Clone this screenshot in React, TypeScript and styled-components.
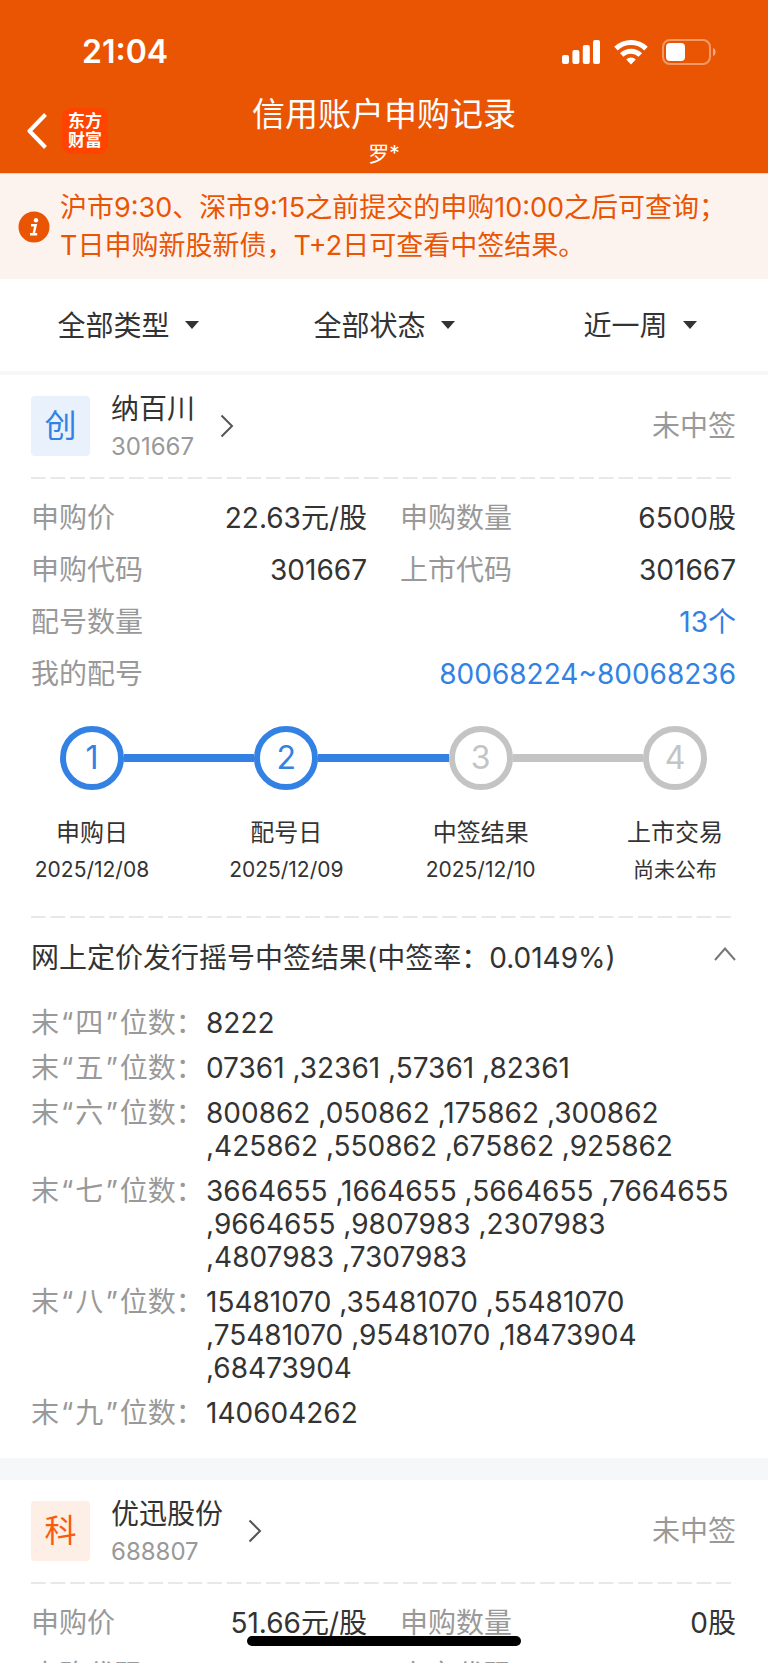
import React from 'react';
import styled, { createGlobalStyle } from 'styled-components';

const colors = {
  brand: '#ea5504',
  notice: '#fdf3ee',
  text: '#333333',
  muted: '#999999',
  blue: '#3381e3',
  idle: '#c4c4c4',
  band: '#f6f7f9',
};

const GlobalStyle = createGlobalStyle`
  * { box-sizing: border-box; }
  html, body { margin: 0; padding: 0; }
  body {
    background: #ffffff;
    color: ${colors.text};
    font-family: Inter, "Noto Sans CJK SC", sans-serif;
    font-size: 28px;
    font-weight: 400;
  }
  button, select { font: inherit; color: inherit; background: none; border: 0; padding: 0; margin: 0; }
  h1, h2, p, ol, dl, dd { margin: 0; padding: 0; font-weight: inherit; }
`;

const Screen = styled.div`
  display: flex;
  flex-direction: column;
  height: 100vh;
  overflow: hidden;
`;

const Header = styled.header`
  flex: none;
  background: ${colors.brand};
  color: #ffffff;
`;

const StatusBar = styled.div`
  display: flex;
  align-items: center;
  justify-content: space-between;
  height: 94px;
  padding: 9px 52px 0 82px;
`;

const Clock = styled.time`
  font-size: 32px;
  line-height: 40px;
  font-weight: 600;
`;

const StatusIcons = styled.div`
  display: flex;
  align-items: center;
  gap: 14px;
  svg { display: block; }
`;

const NavBar = styled.nav`
  display: grid;
  grid-template-columns: 1fr auto 1fr;
  align-items: center;
  padding: 0 27px 5px;
`;

const NavLeft = styled.div`
  display: flex;
  align-items: center;
  gap: 15px;
`;

const IconButton = styled.button`
  display: flex;
  align-items: center;
  cursor: pointer;
`;

const BrandLogo = styled.a`
  display: flex;
  flex-direction: column;
  align-items: center;
  justify-content: center;
  width: 46px;
  height: 46px;
  border-radius: 9px;
  background: #ff4400;
  color: #ffffff;
  font-size: 17px;
  line-height: 19px;
  font-weight: 700;
  text-decoration: none;
`;

const NavTitle = styled.div`
  display: flex;
  flex-direction: column;
  align-items: center;
  gap: 6px;
`;

const Title = styled.h1`
  font-size: 33px;
  line-height: 40px;
`;

const Account = styled.p`
  font-size: 21px;
  line-height: 28px;
`;

const Notice = styled.div`
  flex: none;
  display: flex;
  align-items: center;
  gap: 10px;
  padding: 15px 18px 14px;
  border-top: 1px solid #f9cdb3;
  background: ${colors.notice};
  color: ${colors.brand};
  font-size: 27px;
  line-height: 38px;
  svg { flex: none; }
`;

const Filters = styled.div`
  flex: none;
  display: grid;
  grid-template-columns: repeat(3, 1fr);
  height: 96px;
  border-bottom: 4px solid ${colors.band};
`;

const Filter = styled.label`
  display: flex;
  align-items: center;
  justify-content: center;
  gap: 15px;
`;

const FilterSelect = styled.select`
  appearance: none;
  field-sizing: content;
  padding-top: 2px;
  line-height: 40px;
  cursor: pointer;
`;

const List = styled.main`
  flex: 1;
  min-height: 0;
  overflow-y: auto;
  scrollbar-width: none;
`;

const Card = styled.article`
  padding: 21px 32px 28px 31px;
  & + & { border-top: 22px solid ${colors.band}; }
`;

const CardHead = styled.header`
  display: flex;
  align-items: center;
  height: 60px;
  margin-bottom: 21px;
`;

const Badge = styled.span<{ $tone: 'blue' | 'orange' }>`
  display: flex;
  align-items: center;
  justify-content: center;
  width: 59px;
  height: 60px;
  margin-right: 21px;
  border-radius: 4px;
  font-size: 32px;
  line-height: 40px;
  color: ${p => (p.$tone === 'blue' ? colors.blue : '#fa5a0a')};
  background: ${p => (p.$tone === 'blue' ? '#e9f1fc' : '#fdeee6')};
`;

const StockLink = styled.a`
  display: flex;
  align-items: center;
  gap: 25px;
  color: ${colors.text};
  text-decoration: none;
`;

const StockText = styled.div`
  padding-top: 2px;
`;

const StockName = styled.h2`
  font-size: 28px;
  line-height: 40px;
`;

const StockCode = styled.p`
  font-size: 24px;
  line-height: 36px;
  color: ${colors.muted};
`;

const Status = styled.span`
  margin-left: auto;
  color: ${colors.muted};
  line-height: 40px;
`;

const Divider = styled.hr`
  height: 2px;
  margin: 0;
  border: 0;
  background: linear-gradient(90deg, #e8e8e8 77%, transparent 77%) 0 0 / calc(100% / 36) 2px repeat-x;
`;

const Facts = styled.dl`
  display: grid;
  grid-template-columns: 1fr 1fr;
  column-gap: 33px;
  row-gap: 12px;
  padding: 19px 0 0;
  line-height: 40px;
`;

const Fact = styled.div<{ $wide?: boolean }>`
  display: flex;
  justify-content: space-between;
  grid-column: ${p => (p.$wide ? '1 / -1' : 'auto')};
`;

const FactLabel = styled.dt`
  color: ${colors.muted};
`;

const FactValue = styled.dd<{ $link?: boolean }>`
  color: ${p => (p.$link ? colors.blue : colors.text)};
`;

const Track = styled.div`
  display: flex;
  align-items: center;
  padding: 0 29px;
  margin-top: 32px;
`;

const Dot = styled.span<{ $done: boolean }>`
  flex: none;
  display: flex;
  align-items: center;
  justify-content: center;
  width: 64px;
  height: 64px;
  border: 6px solid ${p => (p.$done ? colors.blue : colors.idle)};
  border-radius: 50%;
  color: ${p => (p.$done ? colors.blue : colors.idle)};
  font-size: 32px;
  line-height: 40px;
`;

const Line = styled.span<{ $done: boolean }>`
  flex: 1;
  height: 8px;
  background: ${p => (p.$done ? colors.blue : colors.idle)};
`;

const StepLabels = styled.ol`
  display: flex;
  justify-content: space-between;
  margin: 26px 0 30px;
  list-style: none;
`;

const StepLabel = styled.li`
  display: flex;
  flex-direction: column;
  align-items: center;
  gap: 4px;
  width: 122px;
  font-size: 24px;
  line-height: 34px;
  white-space: nowrap;
  small { font-size: 21px; line-height: 32px; }
`;

const ResultToggle = styled.button`
  display: flex;
  align-items: center;
  justify-content: space-between;
  width: 100%;
  padding: 20px 0;
  line-height: 40px;
  text-align: left;
  cursor: pointer;
`;

const Results = styled.dl`
  display: grid;
  grid-template-columns: 175px 1fr;
  row-gap: 12px;
  padding-top: 9px;
  line-height: 33px;
  white-space: nowrap;
`;

const ResultLabel = styled.dt`
  color: ${colors.muted};
`;

const Quote = styled.span`
  padding: 0 2px;
`;

const ResultLine = styled.span`
  display: block;
`;

const HomeIndicator = styled.div`
  position: fixed;
  left: 50%;
  bottom: 17px;
  width: 274px;
  height: 10px;
  margin-left: -137px;
  border-radius: 5px;
  background: #000000;
`;

const SignalIcon = () => (
  <svg width="38" height="26" viewBox="0 0 38 26" fill="#fff" aria-hidden="true">
    <rect x="0" y="16" width="7" height="9" rx="2" />
    <rect x="10.4" y="11" width="7" height="14" rx="2" />
    <rect x="20.8" y="6" width="7" height="19" rx="2" />
    <rect x="31" y="1" width="7" height="24" rx="2" />
  </svg>
);

const WifiIcon = () => (
  <svg width="34" height="26" viewBox="0 0 34 26" fill="none" stroke="#fff" strokeWidth="5" aria-hidden="true">
    <path d="M2 9.6a21.6 21.6 0 0 1 30 0" />
    <path d="M7.7 16a13.2 13.2 0 0 1 18.6 0" />
    <path d="M17 25.5l-4.8-5a6.8 6.8 0 0 1 9.6 0z" fill="#fff" stroke="none" />
  </svg>
);

const BatteryIcon = () => (
  <svg width="54" height="26" viewBox="0 0 54 26" fill="none" aria-hidden="true">
    <rect x="1" y="1" width="47" height="24" rx="7" stroke="#fff" strokeOpacity="0.4" strokeWidth="2" />
    <rect x="4" y="4" width="19" height="18" rx="4" fill="#fff" />
    <path d="M51 9c3.4 1 3.4 7 0 8z" fill="#fff" fillOpacity="0.5" />
  </svg>
);

const BackIcon = () => (
  <svg width="20" height="36" viewBox="0 0 20 36" fill="none" stroke="#fff" strokeWidth="4" strokeLinejoin="round" aria-hidden="true">
    <path d="M18.5 1.5L2.5 18l16 16.5" />
  </svg>
);

const InfoIcon = () => (
  <svg width="32" height="32" viewBox="0 0 32 32" aria-hidden="true">
    <circle cx="16" cy="16" r="15.5" fill={colors.brand} />
    <circle cx="18" cy="9.3" r="2.2" fill="#fff" />
    <path d="M13 14.2h4.6l-2 9M12 23.2h7.2" fill="none" stroke="#fff" strokeWidth="2.4" />
  </svg>
);

const CaretIcon = () => (
  <svg width="14" height="8" viewBox="0 0 14 8" fill={colors.text} aria-hidden="true">
    <path d="M0 0h14L7 8z" />
  </svg>
);

const ChevronRight = () => (
  <svg width="14" height="24" viewBox="0 0 14 24" fill="none" stroke="#555" strokeWidth="2" aria-hidden="true">
    <path d="M1.5 1.5L12 12 1.5 22.5" />
  </svg>
);

const ChevronUp = () => (
  <svg width="22" height="24" viewBox="0 0 22 24" fill="none" stroke="#777" strokeWidth="2" aria-hidden="true">
    <path d="M1 14L11 2.5 21 14" />
  </svg>
);

type FactItem = { label: string; value: string; wide?: boolean; link?: boolean };
type Step = { name: string; date: string; done: boolean };
type Result = { digit: string; lines: string[] };
type Subscription = {
  board: string;
  tone: 'blue' | 'orange';
  name: string;
  code: string;
  facts: FactItem[];
  steps?: Step[];
  rate?: string;
  results?: Result[];
};

const filters = [
  { name: '类型', options: ['全部类型', '新股', '新债'] },
  { name: '状态', options: ['全部状态', '已中签', '未中签'] },
  { name: '时间', options: ['近一周', '近一月', '近一年'] },
];

const subscriptions: Subscription[] = [
  {
    board: '创',
    tone: 'blue',
    name: '纳百川',
    code: '301667',
    facts: [
      { label: '申购价', value: '22.63元/股' },
      { label: '申购数量', value: '6500股' },
      { label: '申购代码', value: '301667' },
      { label: '上市代码', value: '301667' },
      { label: '配号数量', value: '13个', wide: true, link: true },
      { label: '我的配号', value: '80068224~80068236', wide: true, link: true },
    ],
    steps: [
      { name: '申购日', date: '2025/12/08', done: true },
      { name: '配号日', date: '2025/12/09', done: true },
      { name: '中签结果', date: '2025/12/10', done: false },
      { name: '上市交易', date: '尚未公布', done: false },
    ],
    rate: '0.0149%',
    results: [
      { digit: '四', lines: ['8222'] },
      { digit: '五', lines: ['07361 ,32361 ,57361 ,82361'] },
      { digit: '六', lines: ['800862 ,050862 ,175862 ,300862', ',425862 ,550862 ,675862 ,925862'] },
      {
        digit: '七',
        lines: ['3664655 ,1664655 ,5664655 ,7664655', ',9664655 ,9807983 ,2307983', ',4807983 ,7307983'],
      },
      {
        digit: '八',
        lines: ['15481070 ,35481070 ,55481070', ',75481070 ,95481070 ,18473904', ',68473904'],
      },
      { digit: '九', lines: ['140604262'] },
    ],
  },
  {
    board: '科',
    tone: 'orange',
    name: '优迅股份',
    code: '688807',
    facts: [
      { label: '申购价', value: '51.66元/股' },
      { label: '申购数量', value: '0股' },
      { label: '申购代码', value: '' },
      { label: '上市代码', value: '' },
    ],
  },
];

const Progress = ({ steps }: { steps: Step[] }) => (
  <>
    <Track>
      {steps.map((step, i) => (
        <React.Fragment key={step.name}>
          {i > 0 && <Line $done={steps[i - 1].done} />}
          <Dot $done={step.done}>{i + 1}</Dot>
        </React.Fragment>
      ))}
    </Track>
    <StepLabels>
      {steps.map(step => (
        <StepLabel key={step.name}>
          {step.name}
          <small>{step.date}</small>
        </StepLabel>
      ))}
    </StepLabels>
  </>
);

const SubscriptionCard = ({ item }: { item: Subscription }) => {
  const [open, setOpen] = React.useState(true);
  return (
    <Card>
      <CardHead>
        <Badge $tone={item.tone}>{item.board}</Badge>
        <StockLink href={`#${item.code}`}>
          <StockText>
            <StockName>{item.name}</StockName>
            <StockCode>{item.code}</StockCode>
          </StockText>
          <ChevronRight />
        </StockLink>
        <Status>未中签</Status>
      </CardHead>
      <Divider />
      <Facts>
        {item.facts.map(fact => (
          <Fact key={fact.label} $wide={fact.wide}>
            <FactLabel>{fact.label}</FactLabel>
            <FactValue $link={fact.link}>{fact.value}</FactValue>
          </Fact>
        ))}
      </Facts>
      {item.steps && <Progress steps={item.steps} />}
      {item.results && (
        <>
          <Divider />
          <ResultToggle type="button" aria-expanded={open} onClick={() => setOpen(!open)}>
            <span>网上定价发行摇号中签结果(中签率：{item.rate})</span>
            <ChevronUp />
          </ResultToggle>
          {open && (
            <Results>
              {item.results.map(result => (
                <React.Fragment key={result.digit}>
                  <ResultLabel>
                    末<Quote>“</Quote>
                    {result.digit}
                    <Quote>”</Quote>位数：
                  </ResultLabel>
                  <dd>
                    {result.lines.map(line => (
                      <ResultLine key={line}>{line}</ResultLine>
                    ))}
                  </dd>
                </React.Fragment>
              ))}
            </Results>
          )}
        </>
      )}
    </Card>
  );
};

export default function App() {
  return (
    <Screen lang="zh-CN">
      <GlobalStyle />
      <Header>
        <StatusBar>
          <Clock>21:04</Clock>
          <StatusIcons>
            <SignalIcon />
            <WifiIcon />
            <BatteryIcon />
          </StatusIcons>
        </StatusBar>
        <NavBar>
          <NavLeft>
            <IconButton type="button" aria-label="返回">
              <BackIcon />
            </IconButton>
            <BrandLogo href="#home">
              <span>东方</span>
              <span>财富</span>
            </BrandLogo>
          </NavLeft>
          <NavTitle>
            <Title>信用账户申购记录</Title>
            <Account>罗*</Account>
          </NavTitle>
        </NavBar>
      </Header>
      <Notice>
        <InfoIcon />
        <p>
          沪市9:30、深市9:15之前提交的申购10:00之后可查询；
          <br />
          T日申购新股新债，T+2日可查看中签结果。
        </p>
      </Notice>
      <Filters>
        {filters.map(filter => (
          <Filter key={filter.name}>
            <FilterSelect aria-label={filter.name}>
              {filter.options.map(option => (
                <option key={option}>{option}</option>
              ))}
            </FilterSelect>
            <CaretIcon />
          </Filter>
        ))}
      </Filters>
      <List>
        {subscriptions.map(item => (
          <SubscriptionCard key={item.code} item={item} />
        ))}
      </List>
      <HomeIndicator />
    </Screen>
  );
}
